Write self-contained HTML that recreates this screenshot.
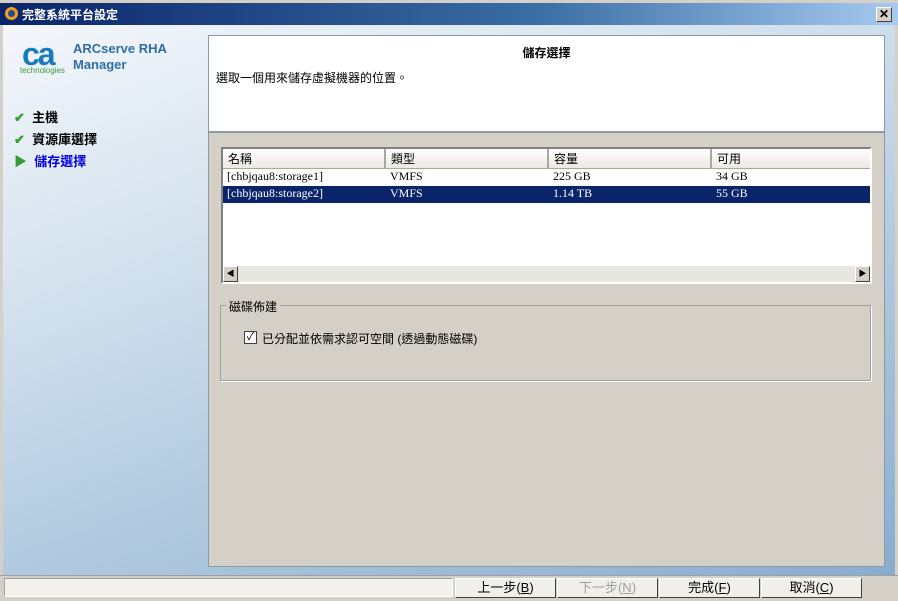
<!DOCTYPE html>
<html><head><meta charset="utf-8"><style>
*{margin:0;padding:0;box-sizing:border-box}
body{width:898px;height:601px;overflow:hidden;position:relative;font-family:"Liberation Sans","Noto Sans CJK TC",sans-serif;font-size:12px;background:#d4d0c8}
.abs{position:absolute}
#title{left:0;top:0;width:898px;height:25px;background:linear-gradient(90deg,#0a246a 0%,#3a6ea5 60%,#a6caf0 100%);border-top:3px solid #d4d0c8}
#title span{position:absolute;left:22px;top:4px;color:#fff;font-weight:bold;font-size:12px}
#bg{left:3px;top:25px;width:892px;height:550px;background:linear-gradient(160deg,#f4f7fb 0%,#d6e3ef 30%,#a9c4dc 70%,#88acd0 100%)}
#panel{left:208px;top:35px;width:677px;height:532px;background:#d4d0c8;border:1px solid #8a9aa0}
#hdr{left:0;top:0;width:675px;height:97px;background:#fff;border-bottom:2px solid #8a9aa0}
.list{left:12px;top:111px;width:651px;height:137px;background:#fff;border:2px solid;border-color:#808080 #fff #fff #808080}
.th{position:absolute;top:0;height:20px;background:linear-gradient(#fff,#ebe9e3);border-right:2px solid #aca899;border-bottom:1px solid #aca899;padding:1px 5px;font-size:12px}
.td{position:absolute;font-family:"Liberation Serif","Noto Serif CJK SC",serif;font-size:12px}
.btn{position:absolute;top:578px;height:20px;width:101px;background:#f0efeb;border:1px solid;border-color:#fff #404040 #404040 #fff;text-align:center;font-size:13px;line-height:18px}
</style></head><body>
<div id="title" class="abs">
<svg class="abs" style="left:4px;top:3px" width="15" height="15"><circle cx="7.5" cy="7.5" r="6.5" fill="#f0a020"/><circle cx="7.5" cy="7.5" r="3.5" fill="#2a4a90"/></svg>
<span style="top:3px">完整系統平台設定</span>
<div class="abs" style="right:6px;top:4px;width:16px;height:15px;background:#d4d0c8;border:1px solid;border-color:#fff #404040 #404040 #fff;font-size:12px;line-height:12px;text-align:center;font-weight:bold">✕</div>
</div>
<div id="bg" class="abs"></div>
<div class="abs" style="left:22px;top:36px;font:bold 32px 'Liberation Sans',sans-serif;color:#1a7ac0;letter-spacing:-2px">ca</div>
<div class="abs" style="left:20px;top:66px;font-size:8px;color:#3a9a3a">technologies</div>
<div class="abs" style="left:73px;top:41px;font-weight:bold;font-size:13px;color:#2f6ea5;line-height:16px">ARCserve RHA<br>Manager</div>
<div class="abs" style="left:14px;top:107px;font-weight:bold;font-size:13px;line-height:22px">
<div><span style="color:#3a9a3a">✔</span>&nbsp; 主機</div>
<div><span style="color:#3a9a3a">✔</span>&nbsp; 資源庫選擇</div>
<div style="color:#0000e0"><span style="color:#3a9a3a">▶</span>&nbsp; 儲存選擇</div>
</div>
<div id="panel" class="abs">
<div id="hdr" class="abs">
<div class="abs" style="left:0;width:675px;top:8px;text-align:center;font-weight:bold">儲存選擇</div>
<div class="abs" style="left:7px;top:33px">選取一個用來儲存虛擬機器的位置。</div>
</div>
<div class="list abs">
<div class="th" style="left:0;width:163px">名稱</div>
<div class="th" style="left:163px;width:163px">類型</div>
<div class="th" style="left:326px;width:163px">容量</div>
<div class="th" style="left:489px;width:158px;border-right:none">可用</div>
<div class="td" style="left:4px;top:20px">[chbjqau8:storage1]</div>
<div class="td" style="left:167px;top:20px">VMFS</div>
<div class="td" style="left:330px;top:20px">225 GB</div>
<div class="td" style="left:493px;top:20px">34 GB</div>
<div class="abs" style="left:0;top:37px;width:647px;height:17px;background:#0a246a"></div>
<div class="td" style="left:4px;top:37px;color:#fff">[chbjqau8:storage2]</div>
<div class="td" style="left:167px;top:37px;color:#fff">VMFS</div>
<div class="td" style="left:330px;top:37px;color:#fff">1.14 TB</div>
<div class="td" style="left:493px;top:37px;color:#fff">55 GB</div>
<div class="abs" style="left:0;top:117px;width:647px;height:16px;background:#e8e6e0"></div>
<div class="abs" style="left:0;top:117px;width:15px;height:16px;background:#d4d0c8;border:1px solid;border-color:#fff #404040 #404040 #fff;font-size:8px;text-align:center;line-height:14px">◀</div>
<div class="abs" style="left:632px;top:117px;width:15px;height:16px;background:#d4d0c8;border:1px solid;border-color:#fff #404040 #404040 #fff;font-size:8px;text-align:center;line-height:14px">▶</div>
</div>
<div class="abs" style="left:11px;top:269px;width:651px;height:76px;border:1px solid #a0a0a0;box-shadow:1px 1px 0 #fff"></div>
<div class="abs" style="left:17px;top:262px;background:#d4d0c8;padding:0 3px">磁碟佈建</div>
<div class="abs" style="left:35px;top:295px;width:13px;height:13px;background:#fff;border:1px solid #404040;font-size:11px;line-height:11px;text-align:center">✓</div>
<div class="abs" style="left:53px;top:294px">已分配並依需求認可空間 (透過動態磁碟)</div>
</div>
<div class="abs" style="left:0;top:575px;width:898px;height:26px;background:#d4d0c8;border-top:1px solid #a0a0a0"></div>
<div class="abs" style="left:4px;top:578px;width:449px;height:19px;background:#f2f1ee;border:1px solid;border-color:#a0a0a0 #fff #fff #a0a0a0"></div>
<div class="btn" style="left:455px">上一步(<u>B</u>)</div>
<div class="btn" style="left:557px;color:#a0a0a0">下一步(<u>N</u>)</div>
<div class="btn" style="left:659px">完成(<u>F</u>)</div>
<div class="btn" style="left:761px">取消(<u>C</u>)</div>
</body></html>
